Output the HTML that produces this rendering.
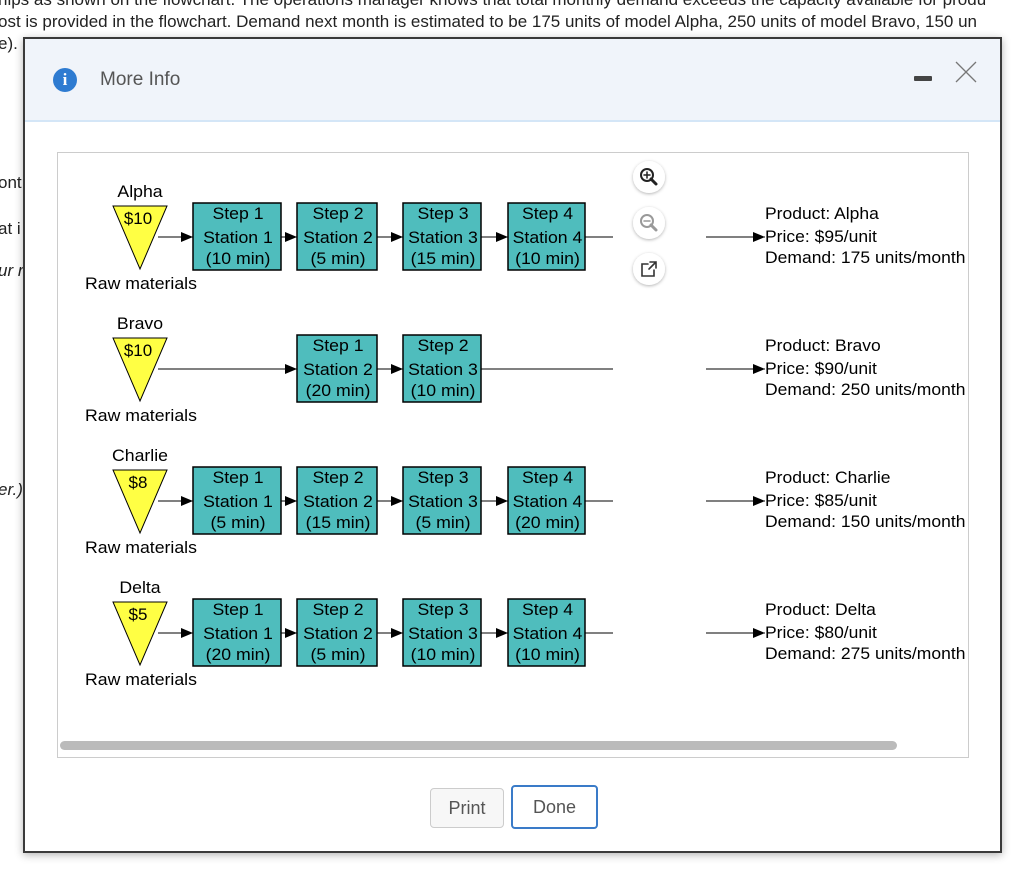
<!DOCTYPE html>
<html><head><meta charset="utf-8"><style>
body{margin:0;width:1024px;height:892px;background:#fff;position:relative;overflow:hidden;font-family:"Liberation Sans",Arial,sans-serif}
.bg{position:absolute;font-size:17px;color:#222;white-space:nowrap}
.dlg{position:absolute;left:23px;top:37px;width:975px;height:812px;border:2px solid #3a3a3a;background:#fff;box-shadow:0 2px 8px rgba(0,0,0,.3)}
.hdr{position:absolute;left:0;top:0;right:0;height:81px;background:#f0f4fa;border-bottom:2px solid #d4e6f7}
.btn{position:absolute;font-size:18px;color:#555;text-align:center;border-radius:4px}
</style></head><body>
<div class="bg" style="left:-2px;top:-10px">hips as shown on the flowchart. The operations manager knows that total monthly demand exceeds the capacity available for produ</div>
<div class="bg" style="left:-2px;top:12px">ost is provided in the flowchart. Demand next month is estimated to be 175 units of model Alpha, 250 units of model Bravo, 150 un</div>
<div class="bg" style="left:-2px;top:34px">e).</div>
<div class="bg" style="left:-2px;top:173px">ont</div>
<div class="bg" style="left:-2px;top:219px">at i</div>
<div class="bg" style="left:-2px;top:261px;font-style:italic">ur r</div>
<div class="bg" style="left:-2px;top:480px;font-style:italic">er.)</div>
<div class="dlg">
<div class="hdr">
 <div style="position:absolute;left:28px;top:29px;width:24px;height:24px;border-radius:50%;background:#2e7bd1;color:#fff;font:bold 17px 'Liberation Serif',serif;text-align:center;line-height:24px">i</div>
 <div style="position:absolute;left:75px;top:30px;font-size:19px;color:#555">More Info</div>
 <div style="position:absolute;left:889px;top:37px;width:18px;height:5px;background:#444;border-radius:1px"></div>
 <svg style="position:absolute;left:929px;top:21px" width="24" height="24"><path d="M2 2L22 22M22 2L2 22" stroke="#777" stroke-width="1.3"/></svg>
</div>
</div>
<div style="position:absolute;left:57px;top:152px;width:910px;height:604px;border:1px solid #ccc;background:#fff"></div>
<svg style="position:absolute;left:0;top:0" width="1024" height="892" font-family="Liberation Sans,Arial,sans-serif">
<defs><clipPath id="c"><rect x="58" y="153" width="909" height="603"/></clipPath>
<marker id="a" markerWidth="12" markerHeight="10" refX="12" refY="5" orient="auto" markerUnits="userSpaceOnUse"><path d="M0 0L12 5L0 10z" fill="#000"/></marker>
<filter id="s"><feDropShadow dx="0" dy="1" stdDeviation="1.5" flood-opacity=".3"/></filter></defs>
<g clip-path="url(#c)">
<g id="r0">
</g>
</g>
<g filter="url(#s)" fill="#fff"><circle cx="649" cy="177" r="16"/><circle cx="649" cy="223" r="16"/><circle cx="649" cy="269" r="16"/></g>
<g fill="none" stroke-linecap="round">
<circle cx="647" cy="175" r="6" stroke="#222" stroke-width="2"/><path d="M651 179l5 5" stroke="#222" stroke-width="3"/><path d="M644 175h6M647 172v6" stroke="#222" stroke-width="1.5"/>
<circle cx="647" cy="221" r="6" stroke="#999" stroke-width="2"/><path d="M651 225l5 5" stroke="#999" stroke-width="3"/><path d="M644 221h6" stroke="#999" stroke-width="1.5"/>
<path d="M648 264h-6v12h12v-6M650 262h6v6M656 262l-7 7" stroke="#333" stroke-width="1.6"/>
</g>
<rect x="60" y="741" width="837" height="9" rx="4.5" fill="#bbb"/>
</svg>
<div class="btn" style="left:430px;top:788px;width:72px;height:38px;line-height:38px;border:1px solid #ccc;background:#f7f7f7">Print</div>
<div class="btn" style="left:511px;top:785px;width:83px;height:40px;line-height:40px;border:2.5px solid #3a7bc8;background:#fff">Done</div>
<script>
var rows=[["Alpha","$10",[[1,1,"10 min"],[2,2,"5 min"],[3,3,"15 min"],[4,4,"10 min"]],"Alpha","$95","175"],
["Bravo","$10",[null,[1,2,"20 min"],[2,3,"10 min"],null],"Bravo","$90","250"],
["Charlie","$8",[[1,1,"5 min"],[2,2,"15 min"],[3,3,"5 min"],[4,4,"20 min"]],"Charlie","$85","150"],
["Delta","$5",[[1,1,"20 min"],[2,2,"5 min"],[3,3,"10 min"],[4,4,"10 min"]],"Delta","$80","275"]];
var bx=[[193,88],[297,80],[403,78],[508,77]];
function t(x,y,str,fs,sc,mid){return '<text transform="translate('+x+' '+y+') scale('+sc+' 1)" font-size="'+fs+'"'+(mid?' text-anchor="middle"':'')+'>'+str+'</text>';}
var s="";
rows.forEach(function(r,i){var o=i*132;
s+=t(140,197+o,r[0],17,1.04,1);
s+='<polygon points="113,'+(206+o)+' 167,'+(206+o)+' 140,'+(269+o)+'" fill="#ffff44" stroke="#000"/>';
s+=t(138,224+o,r[1],17,1.0,1);
s+=t(85,289+o,"Raw materials",17,1.04,0);
var prev=158;
r[2].forEach(function(b,j){if(!b)return;var x=bx[j][0],w=bx[j][1];
s+='<line x1="'+prev+'" y1="'+(237+o)+'" x2="'+x+'" y2="'+(237+o)+'" stroke="#000" marker-end="url(#a)"/>';
s+='<rect x="'+x+'" y="'+(203+o)+'" width="'+w+'" height="67" fill="#4fbdbd" stroke="#000" stroke-width="1.5"/>';
var cx=x+w/2+1;
s+=t(cx,219+o,"Step "+b[0],17,1.04,1)+t(cx,243+o,"Station "+b[1],17,1.04,1)+t(cx,264+o,"("+b[2]+")",17,1.04,1);
prev=x+w;});
s+='<line x1="'+prev+'" y1="'+(237+o)+'" x2="613" y2="'+(237+o)+'" stroke="#000"/>';
s+='<line x1="706" y1="'+(237+o)+'" x2="765" y2="'+(237+o)+'" stroke="#000" marker-end="url(#a)"/>';
s+=t(765,219+o,"Product: "+r[3],17,1.03,0)+t(765,242+o,"Price: "+r[4]+"/unit",17,1.03,0)+t(765,263+o,"Demand: "+r[5]+" units/month",17,1.03,0);
});
document.getElementById("r0").innerHTML=s;
</script>
</body></html>
